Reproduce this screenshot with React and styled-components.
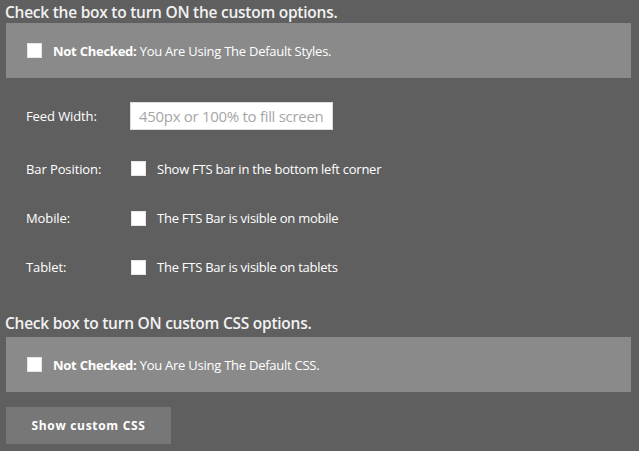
import React from "react";
import styled, { createGlobalStyle } from "styled-components";

const Global = createGlobalStyle`
  html, body { margin: 0; padding: 0; background: #5f5f5f; }
  body { font-family: "Open Sans", "Liberation Sans", sans-serif; color: #fff; }
`;

const Page = styled.div`
  padding: 0 8px 8px 6px;
  width: 625px;
`;

const Heading = styled.h2`
  margin: 0 0 0 -1px;
  font-size: 15.5px;
  font-weight: 600;
  line-height: 22px;
  padding-top: 1px;
  height: ${(p) => p.$h || 23}px;
  box-sizing: border-box;
  color: #f2f2f2;
  letter-spacing: -0.25px;
  white-space: nowrap;
`;

const Panel = styled.div`
  background: #8a8a8a;
  height: 55px;
  display: flex;
  align-items: center;
  padding: 0 21px;
  gap: 11px;
  box-sizing: border-box;
`;

const Box = styled.span`
  display: inline-block;
  width: 15px;
  height: 15px;
  background: #fff;
  border: 1px solid #e6e6e6;
  box-sizing: border-box;
  flex: none;
`;

const Text = styled.span`
  font-size: 13px;
  letter-spacing: -0.25px;
  color: #fff;
  white-space: nowrap;
  b { font-weight: 700; }
`;

const Form = styled.div`
  padding: 23px 0 7px 20px;
  display: flex;
  flex-direction: column;
`;

const Row = styled.div`
  display: flex;
  align-items: center;
  height: ${(p) => p.$h}px;
`;

const Label = styled.span`
  width: 104px;
  flex: none;
  font-size: 13px;
  letter-spacing: -0.1px;
  color: #fff;
`;

const Input = styled.input`
  width: 203px;
  height: 28px;
  box-sizing: border-box;
  border: 1px solid #dcdcdc;
  background: #fff;
  padding: 0 8px;
  font-family: "Open Sans", sans-serif;
  font-size: 15px;
  letter-spacing: -0.3px;
  outline: none;
  &::placeholder { color: #a6a6a6; }
`;

const Check = styled.div`
  display: flex;
  align-items: center;
  gap: 11px;
  margin-left: 1px;
`;

const Button = styled.button`
  margin-top: 15px;
  width: 165px;
  height: 37px;
  background: #777;
  border: none;
  color: #fff;
  font-family: "Open Sans", sans-serif;
  font-weight: 700;
  font-size: 12px;
  letter-spacing: 0.7px;
  padding: 0;
`;

export default function App() {
  return (
    <>
      <Global />
      <Page>
        <Heading>Check the box to turn ON the custom options.</Heading>
        <Panel>
          <Box />
          <Text><b>Not Checked:</b> You Are Using The Default Styles.</Text>
        </Panel>
        <Form>
          <Row $h={30}>
            <Label>Feed Width:</Label>
            <Input placeholder="450px or 100% to fill screen" />
          </Row>
          <Row $h={75}>
            <Label>Bar Position:</Label>
            <Check><Box /><Text>Show FTS bar in the bottom left corner</Text></Check>
          </Row>
          <Row $h={24}>
            <Label>Mobile:</Label>
            <Check><Box /><Text>The FTS Bar is visible on mobile</Text></Check>
          </Row>
          <Row $h={74}>
            <Label>Tablet:</Label>
            <Check><Box /><Text>The FTS Bar is visible on tablets</Text></Check>
          </Row>
        </Form>
        <Heading $h={26}>Check box to turn ON custom CSS options.</Heading>
        <Panel>
          <Box />
          <Text><b>Not Checked:</b> You Are Using The Default CSS.</Text>
        </Panel>
        <Button>Show custom CSS</Button>
      </Page>
    </>
  );
}
